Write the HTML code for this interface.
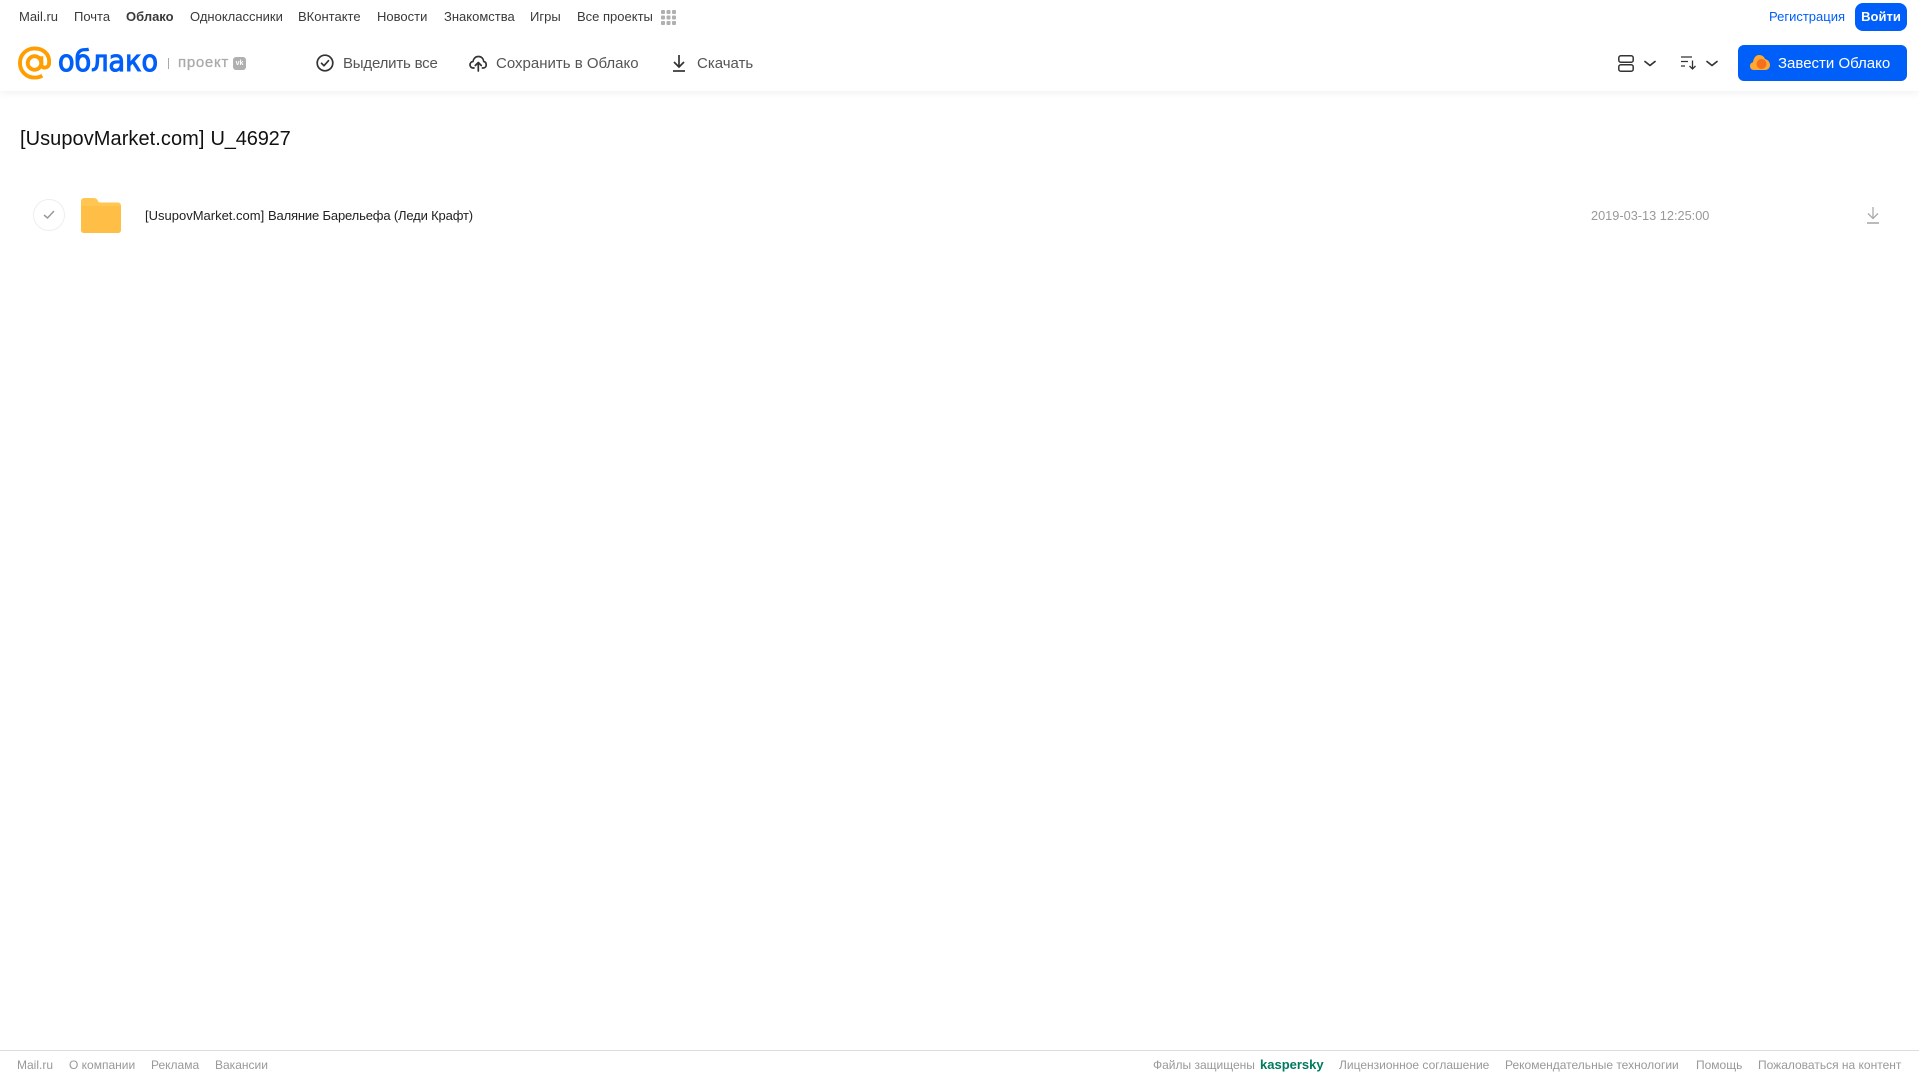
<!DOCTYPE html>
<html lang="ru"><head><meta charset="utf-8"><title>Облако</title>
<style>
html,body{margin:0;padding:0;background:#fff;width:1919px;height:1079px;overflow:hidden}
body{position:relative;font-family:"Liberation Sans",Arial,sans-serif;color:#333}
.t{position:absolute;white-space:nowrap;line-height:16px}
.n{font-size:13px;top:9px;color:#3a3a3a}
.a{font-size:15px;top:56px;color:#555}
.f{font-size:12px;top:1057px;color:#999}
svg{position:absolute;overflow:visible}
</style></head><body>
<div style="position:absolute;left:0;top:0;width:1919px;height:91px;background:#fff;box-shadow:0 2px 8px rgba(0,0,0,.06)"></div>

<span class="t n" style="left:19px">Mail.ru</span>
<span class="t n" style="left:74px">Почта</span>
<span class="t n" style="left:126px;font-weight:700">Облако</span>
<span class="t n" style="left:190px">Одноклассники</span>
<span class="t n" style="left:298px">ВКонтакте</span>
<span class="t n" style="left:377px">Новости</span>
<span class="t n" style="left:444px">Знакомства</span>
<span class="t n" style="left:530px">Игры</span>
<span class="t n" style="left:577px">Все проекты</span>
<svg style="left:661px;top:10px" width="15" height="15" fill="#b0b0b0"><rect width="4" height="4" rx="1"/><rect x="5.500" width="4" height="4" rx="1"/><rect x="11" width="4" height="4" rx="1"/><rect y="5.500" width="4" height="4" rx="1"/><rect x="5.500" y="5.500" width="4" height="4" rx="1"/><rect x="11" y="5.500" width="4" height="4" rx="1"/><rect y="11" width="4" height="4" rx="1"/><rect x="5.500" y="11" width="4" height="4" rx="1"/><rect x="11" y="11" width="4" height="4" rx="1"/></svg>

<span class="t n" style="left:1769px;color:#005ff9">Регистрация</span>
<div style="position:absolute;left:1855px;top:3px;width:52px;height:28px;border-radius:8px;background:#005ff9;color:#fff;font-size:13px;font-weight:700;line-height:28px;text-align:center">Войти</div>

<!-- logo -->
<svg style="left:18px;top:46px" width="35" height="34" viewBox="0 0 36 34" fill="none" stroke="#ff9e00" stroke-width="4"><circle cx="17" cy="17" r="7"/><path d="M24 10v8.500c0 4.500 7.500 4.500 8-1C33 7 25 2 17 2 8.500 2 2 8.500 2 17s6.500 15 15 15c3 0 5.500-.6 8-2"/></svg>
<svg style="left:58px;top:40px" width="110" height="40"><text x="0" y="31" font-family="DejaVu Sans,sans-serif" font-size="29" font-weight="400" fill="#005ff9" stroke="#005ff9" stroke-width="1.100" textLength="100" lengthAdjust="spacingAndGlyphs">облако</text></svg>
<div style="position:absolute;left:168px;top:58px;width:1px;height:11px;background:#aaa"></div>
<span class="t" style="left:178px;top:55px;font-size:15px;color:#aaa;letter-spacing:.7px;-webkit-text-stroke:.3px #aaa">проект</span>
<div style="position:absolute;left:233px;top:57px;width:13px;height:13px;border-radius:3px;background:#b0b0b0;color:#fff;font-size:7px;font-weight:700;line-height:13px;text-align:center">vk</div>

<!-- actions -->
<svg style="left:316px;top:54px" width="18" height="18" fill="none" stroke="#333" stroke-width="1.700"><circle cx="9" cy="9" r="7.800"/><path d="M5.500 9.300l2.500 2.400 4.500-5" stroke-linecap="round" stroke-linejoin="round"/></svg>
<span class="t a" style="left:343px;letter-spacing:-.2px">Выделить все</span>
<svg style="left:469px;top:54px" width="18" height="18" viewBox="0 0 18 18" fill="none" stroke="#333" stroke-width="1.700" stroke-linecap="round" stroke-linejoin="round"><path d="M5 14H4C2 14 1 12.300 1 10.800 1 9 2.300 7.700 4 7.500 4.500 4.500 6.500 2.500 9.500 2.500c3 0 5 2.200 5.200 5 1.500.3 2.500 1.500 2.500 3.200 0 1.700-1 3.300-3 3.300h-.8"/><path d="M9.300 17V9M6.300 11.500l3-3 3 3"/></svg>
<span class="t a" style="left:496px">Сохранить в Облако</span>
<svg style="left:671px;top:54px" width="16" height="18" viewBox="0 0 16 18" fill="none" stroke="#333" stroke-width="1.700"><path d="M8 1v11.500M3 8l5 5 5-5"/><path d="M2 17h12"/></svg>
<span class="t a" style="left:697px">Скачать</span>

<!-- right controls -->
<svg style="left:1618px;top:55px" width="16" height="17" fill="none" stroke="#333" stroke-width="1.500"><rect x=".8" y=".8" width="14.400" height="6.400" rx="2"/><rect x=".8" y="9.800" width="14.400" height="6.400" rx="2"/></svg>
<svg style="left:1644px;top:60px" width="12" height="8" fill="none" stroke="#333" stroke-width="1.700" stroke-linecap="round" stroke-linejoin="round"><path d="M1 1.500l5 4 5-4"/></svg>
<svg style="left:1681px;top:56px" width="16" height="14" fill="none" stroke="#333" stroke-width="1.300"><path d="M0 1h11M0 5.500h7M0 10h4M11.500 4.500V13M8.500 10l3 3 3-3"/></svg>
<svg style="left:1706px;top:60px" width="12" height="8" fill="none" stroke="#333" stroke-width="1.700" stroke-linecap="round" stroke-linejoin="round"><path d="M1 1.500l5 4 5-4"/></svg>
<div style="position:absolute;left:1738px;top:45px;width:169px;height:36px;border-radius:6px;background:#005ff9"></div>
<svg style="left:1750px;top:54px" width="20" height="17"><path d="M4 16C1.500 16 0 14.300 0 12c0-2 1.300-3.500 3-3.800C3.500 4 6 1 9 1c3 0 5 1.500 6 4 3 .6 5 3.500 5 6 0 3-2 5-5 5z" fill="#ffa930"/><circle cx="11.500" cy="10" r="5" fill="#f4701f"/></svg>
<span class="t" style="left:1778px;top:56px;font-size:15px;color:#fff">Завести Облако</span>

<!-- title -->
<div class="t" style="left:20px;top:126px;font-size:20px;line-height:26px;color:#111;letter-spacing:.06px">[UsupovMarket.com]</div>
<div class="t" style="left:210.500px;top:126px;font-size:20px;line-height:26px;color:#111;letter-spacing:-.15px">U_46927</div>

<!-- row -->
<div style="position:absolute;left:33px;top:199px;width:30px;height:30px;border:1px solid #eee;border-radius:50%"></div>
<svg style="left:43px;top:210px" width="12" height="10" fill="none" stroke="#999" stroke-width="1.500"><path d="M1 5l3.500 3L11 1"/></svg>
<svg style="left:81px;top:197px" width="40" height="36"><path d="M0 4a3 3 0 0 1 3-3h9c3 0 4 1 5 3 .5 1 1 1.500 3 1.500h17a3 3 0 0 1 3 3V33a3 3 0 0 1-3 3H3a3 3 0 0 1-3-3z" fill="#ffc751"/><path d="M0 9h40v24a3 3 0 0 1-3 3H3a3 3 0 0 1-3-3z" fill="#ffbe45"/></svg>
<div class="t" style="left:145px;top:208px;font-size:13px;color:#222">[UsupovMarket.com]</div>
<div class="t" style="left:268px;top:208px;font-size:13px;color:#222;letter-spacing:-.16px">Валяние Барельефа (Леди Крафт)</div>
<div class="t" style="left:1591px;top:208px;font-size:12.750px;color:#999">2019-03-13 12:25:00</div>
<svg style="left:1866px;top:206px" width="14" height="18" fill="none" stroke="#aaa" stroke-width="1.300"><path d="M7 1v11M2 7.500l5 5 5-5"/><path d="M1 17h12" stroke-width="1.600"/></svg>

<!-- footer -->
<div style="position:absolute;left:0;top:1050px;width:1919px;height:1px;background:#ddd"></div>
<span class="t f" style="left:17px">Mail.ru</span>
<span class="t f" style="left:69px">О компании</span>
<span class="t f" style="left:151px">Реклама</span>
<span class="t f" style="left:215px">Вакансии</span>
<span class="t f" style="left:1153px">Файлы защищены</span>
<span class="t" style="left:1260px;top:1057px;font-size:13px;font-weight:700;color:#00795f">kaspersky</span>
<span class="t f" style="left:1339px">Лицензионное соглашение</span>
<span class="t f" style="left:1505px">Рекомендательные технологии</span>
<span class="t f" style="left:1696px">Помощь</span>
<span class="t f" style="left:1758px">Пожаловаться на контент</span>
</body></html>
